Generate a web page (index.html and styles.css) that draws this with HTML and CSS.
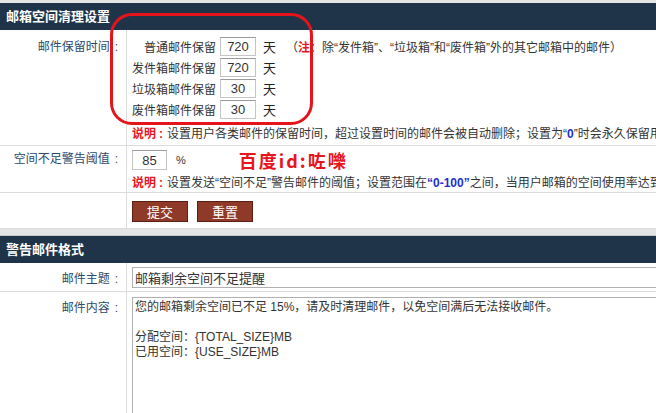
FILE: index.html
```
<!DOCTYPE html>
<html lang="zh-CN">
<head>
    <meta charset="UTF-8">
    <title>邮箱空间清理设置</title>
    <link rel="stylesheet" href="styles.css">
</head>
<body>
    <div class="panel">
        <div class="panel-title">邮箱空间清理设置</div>
        <div class="row row-keep">
            <div class="label">邮件保留时间<span class="colon">:</span></div>
            <div class="field">
                <div class="keep">
                    <span class="keep-name">普通邮件保留</span>
                    <input class="num" type="text" value="720">
                    <span class="unit">天</span>
                    <span class="note">（<b class="red">注</b>：除“发件箱”、“垃圾箱”和“废件箱”外的其它邮箱中的邮件）</span>

                    <span class="keep-name">发件箱邮件保留</span>
                    <input class="num" type="text" value="720">
                    <span class="unit">天</span>
                    <span></span>

                    <span class="keep-name">垃圾箱邮件保留</span>
                    <input class="num" type="text" value="30">
                    <span class="unit">天</span>
                    <span></span>

                    <span class="keep-name">废件箱邮件保留</span>
                    <input class="num" type="text" value="30">
                    <span class="unit">天</span>
                    <span></span>
                </div>
                <p class="tip"><b class="red">说明<span class="colon">:</span></b>设置用户各类邮件的保留时间，超过设置时间的邮件会被自动删除；设置为“<b class="blue">0</b>”时会永久保留用户的邮件。</p>
            </div>
        </div>
        <div class="row row-warn">
            <div class="label">空间不足警告阈值<span class="colon">:</span></div>
            <div class="field">
                <div class="warn-line">
                    <input class="num num-pct" type="text" value="85">
                    <span class="pct">%</span>
                    <span class="stamp">百度id:咗嚛</span>
                </div>
                <p class="tip"><b class="red">说明<span class="colon">:</span></b>设置发送“空间不足”警告邮件的阈值；设置范围在<b class="blue">“0-100”</b>之间，当用户邮箱的空间使用率达到该值时发送警告邮件。</p>
            </div>
        </div>
        <div class="row row-btns">
            <div class="label"></div>
            <div class="field">
                <button class="btn">提交</button>
                <button class="btn">重置</button>
            </div>
        </div>
        <div class="mark"></div>
    </div>

    <div class="panel panel-mail">
        <div class="panel-title">警告邮件格式</div>
        <div class="row row-subject">
            <div class="label">邮件主题<span class="colon">:</span></div>
            <div class="field">
                <input class="wide" type="text" value="邮箱剩余空间不足提醒">
            </div>
        </div>
        <div class="row row-body">
            <div class="label">邮件内容<span class="colon">:</span></div>
            <div class="field">
                <textarea class="wide body-text">您的邮箱剩余空间已不足 15%，请及时清理邮件，以免空间满后无法接收邮件。

分配空间：{TOTAL_SIZE}MB
已用空间：{USE_SIZE}MB</textarea>
            </div>
        </div>
    </div>
</body>
</html>
```

FILE: styles.css
```
body {
    margin: 0;
    padding-top: 3px;
    background: #e4e4e4;
    font-family: "Liberation Sans", "Noto Sans CJK SC", sans-serif;
    font-size: 12px;
    color: #333;
    overflow: hidden;
}
.panel {
    position: relative;
    background: #fff;
}
.panel-mail {
    margin-top: 6px;
    border-top: 1px solid #c8c8c8;
}
.panel-title {
    height: 27px;
    line-height: 27px;
    padding-left: 6px;
    background: #1f3449;
    color: #fff;
    font-size: 13px;
    font-weight: bold;
}
.row {
    display: flex;
    border-bottom: 1px solid #dcdcdc;
}
.label {
    flex: 0 0 120px;
    padding-right: 6px;
    border-right: 1px solid #dcdcdc;
    text-align: right;
    color: #2b4a6d;
    line-height: 16px;
}
.colon {
    padding: 0 2px 0 5px;
}
.tip .colon {
    padding: 0 4px 0 3px;
}
.field {
    flex: 1;
    min-width: 0;
    padding-left: 5px;
    white-space: nowrap;
}
.red { color: #e5161d; }
.blue { color: #1d2fd0; }

.row-keep { height: 115px; }
.row-keep .label { padding-top: 9px; }
.keep {
    display: grid;
    grid-template-columns: 84px 36px 16px auto;
    column-gap: 4px;
    row-gap: 2px;
    align-items: center;
    padding-top: 7px;
}
.keep-name { text-align: right; }
.unit { padding-left: 3px; font-size: 13px; color: #222; }
.note { padding-left: 6px; }
.num {
    box-sizing: border-box;
    width: 36px;
    height: 19px;
    padding: 0;
    border: 1px solid #c4c4c4;
    border-top-color: #9a9a9a;
    font-family: "Liberation Sans", sans-serif;
    font-size: 13px;
    color: #333;
    text-align: center;
}
.tip {
    margin: 7px 0 0;
    line-height: 16px;
}

.row-warn { height: 46px; }
.row-warn .label { padding-top: 5px; }
.warn-line {
    display: flex;
    align-items: center;
    height: 22px;
    padding-top: 3px;
}
.num-pct { width: 35px; height: 20px; }
.pct { margin-left: 9px; font-size: 11px; }
.stamp {
    margin-left: 53px;
    color: #e8141b;
    font-family: "Noto Sans CJK SC", sans-serif;
    font-size: 18px;
    font-weight: bold;
    letter-spacing: 2px;
}
.row-warn .tip { margin-top: 4px; }

.row-btns { height: 35px; }
.row-btns .field {
    display: flex;
    gap: 9px;
    align-items: flex-start;
    padding-top: 8px;
}
.btn {
    width: 56px;
    height: 21px;
    padding: 0;
    border: 1px solid #5a1f12;
    background: #8f3a29;
    color: #fff;
    font-family: "Noto Sans CJK SC", sans-serif;
    font-size: 13px;
    line-height: 19px;
}

.mark {
    position: absolute;
    left: 110px;
    top: 10px;
    width: 197px;
    height: 106px;
    border: 3px solid #e5141b;
    border-radius: 22px;
}

.row-subject { height: 28px; }
.row-subject .label,
.row-body .label { padding-top: 8px; }
.row-subject .field { padding-top: 4px; }
.wide {
    box-sizing: border-box;
    width: 560px;
    height: 21px;
    border: 1px solid #b0b0b0;
    padding: 0 2px;
    font-family: "Liberation Sans", "Noto Sans CJK SC", sans-serif;
    font-size: 13px;
    color: #333;
}
.row-body { height: 160px; border-bottom: none; }
.row-body .field { padding-top: 5px; }
.body-text {
    height: 150px;
    padding: 2px;
    line-height: 15px;
    resize: none;
    font-size: 12px;
}
```
